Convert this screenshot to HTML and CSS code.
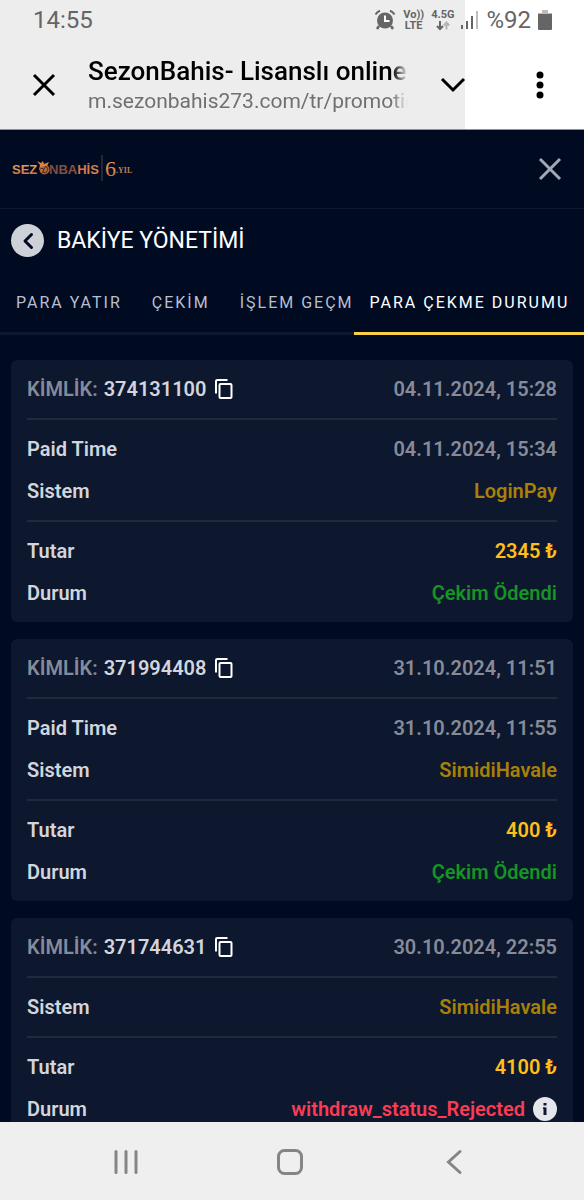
FILE: index.html
```html
<!DOCTYPE html>
<html lang="tr">
<head>
<meta charset="utf-8">
<meta name="viewport" content="width=device-width, initial-scale=1">
<title>SezonBahis- Lisanslı online</title>
<link rel="stylesheet" href="styles.css">
</head>
<body>
<svg class="sprite" aria-hidden="true">
  <symbol id="copy" viewBox="0 0 20 22">
    <path d="M2 15.500V3.200Q2 2 3.200 2H13.500" fill="none" stroke="currentColor" stroke-width="2"/>
    <rect x="5.500" y="6" width="12" height="14" rx="1" fill="none" stroke="currentColor" stroke-width="2"/>
  </symbol>
</svg>
<div class="browser">
  <div class="status">
    <time>14:55</time>
    <div class="status-icons">
      <svg class="alarm" width="22" height="22" viewBox="0 0 22 22" role="img" aria-label="Alarm">
        <circle cx="11" cy="11.500" r="8" fill="#656565"/>
        <path d="M5 17l-2 3M17 17l2 3" stroke="#656565" stroke-width="2.500"/>
        <path d="M1.500 5.500Q3 3 6 1.800M20.500 5.500Q19 3 16 1.800" fill="none" stroke="#656565" stroke-width="2"/>
        <path d="M11 6.500V12h4.500" fill="none" stroke="#fff" stroke-width="2"/>
      </svg>
      <span class="network"><span>Vo))</span><span>LTE</span></span>
      <span class="network">
        <span>4.5G</span>
        <svg width="16" height="11" viewBox="0 0 16 11" aria-hidden="true">
          <path d="M5 1v8M2 6l3 3 3-3" fill="none" stroke="#656565" stroke-width="2"/>
          <path d="M11.500 9.500V3M8.800 5.500l2.700-3 2.700 3" fill="none" stroke="#b5b5b5" stroke-width="2"/>
        </svg>
      </span>
      <svg width="18" height="20" viewBox="0 0 18 20" role="img" aria-label="Sinyal">
        <path d="M1 15v4M6 11v8M11 6v13" stroke="#656565" stroke-width="2"/>
        <path d="M16 1v18" stroke="#bcbcbc" stroke-width="2"/>
      </svg>
      <span class="percent">%92</span>
      <svg width="14" height="20" viewBox="0 0 14 20" role="img" aria-label="Pil">
        <path d="M4 0h6v3h4v3H0V3h4z" fill="#bcbcbc"/>
        <path d="M0 4h14v15q0 1-1 1H1q-1 0-1-1z" fill="#656565"/>
      </svg>
    </div>
  </div>
  <header class="toolbar">
    <button class="icon-button" aria-label="Kapat">
      <svg width="24" height="24" viewBox="0 0 24 24"><path d="M2 2l20 20M22 2L2 22" stroke="#000" stroke-width="3"/></svg>
    </button>
    <div class="page">
      <p class="page-title">SezonBahis- Lisanslı online</p>
      <p class="page-url">m.sezonbahis273.com/tr/promotio</p>
    </div>
    <button class="icon-button" aria-label="Genişlet">
      <svg width="26" height="16" viewBox="0 0 26 16"><path d="M2 2l11 11L24 2" fill="none" stroke="#000" stroke-width="3"/></svg>
    </button>
    <button class="icon-button menu" aria-label="Menü">
      <svg width="8" height="28" viewBox="0 0 8 28"><circle cx="4" cy="4" r="3.500"/><circle cx="4" cy="14" r="3.500"/><circle cx="4" cy="24" r="3.500"/></svg>
    </button>
  </header>
</div>

<main class="site">
  <div class="brand">
    <a class="logo" href="#" aria-label="SezonBahis">
      <svg width="124" height="28" viewBox="0 0 124 28">
        <defs>
          <linearGradient id="warm" x1="0" y1="0" x2="0" y2="1"><stop offset="0" stop-color="#f0a860"/><stop offset="1" stop-color="#d06c35"/></linearGradient>
          <linearGradient id="fade"><stop offset="0" stop-color="#7d4b3d"/><stop offset=".55" stop-color="#8d5142"/><stop offset=".6" stop-color="#d97742"/><stop offset="1" stop-color="#d9834b"/></linearGradient>
        </defs>
        <text x="0" y="19" class="wordmark" fill="url(#warm)">SEZ</text>
        <circle cx="32.500" cy="14.500" r="5" fill="#b96835"/>
        <path d="M25 6l4 2 2-2 1 3 5-2-2 4-4 0-4 4 1-5z" fill="#d98340"/>
        <path d="M28 13l4 1 2-3 2 3-2 4-4-1M32 14l-1 4" fill="none" stroke="#4d2922" stroke-width="1"/>
        <text x="37" y="19" class="wordmark" fill="url(#fade)">NBAHİS</text>
        <path d="M90 0v26" stroke="#49404a"/>
        <text x="93" y="21" class="six" fill="url(#warm)">6</text>
        <text x="104" y="18" class="year" fill="#b9805a">.YIL</text>
      </svg>
    </a>
    <button class="icon-button" aria-label="Kapat">
      <svg width="24" height="24" viewBox="0 0 24 24"><path d="M2 2l20 20M22 2L2 22" stroke="#a3a8b4" stroke-width="3"/></svg>
    </button>
  </div>

  <div class="heading">
    <button class="back" aria-label="Geri">
      <svg width="12" height="18" viewBox="0 0 12 18"><path d="M9.500 2.500L3 9l6.500 6.500" fill="none" stroke="#000b22" stroke-width="3" stroke-linecap="round" stroke-linejoin="round"/></svg>
    </button>
    <h1>BAKİYE YÖNETİMİ</h1>
  </div>

  <nav class="tabs">
    <button class="tab">PARA YATIR</button>
    <button class="tab">ÇEKİM</button>
    <button class="tab cut">İŞLEM GEÇM</button>
    <button class="tab active">PARA ÇEKME DURUMU</button>
  </nav>

  <div class="cards">
    <article class="card">
      <div class="group">
        <div class="row"><span class="ident"><span class="muted">KİMLİK:</span> 374131100 <button class="copy" aria-label="Kopyala"><svg width="20" height="22"><use href="#copy"/></svg></button></span><time class="muted">04.11.2024, 15:28</time></div>
      </div>
      <div class="group">
        <div class="row"><span>Paid Time</span><time class="muted">04.11.2024, 15:34</time></div>
        <div class="row"><span>Sistem</span><span class="system">LoginPay</span></div>
      </div>
      <div class="group">
        <div class="row"><span>Tutar</span><span class="amount">2345 ₺</span></div>
        <div class="row"><span>Durum</span><span class="paid">Çekim Ödendi</span></div>
      </div>
    </article>

    <article class="card">
      <div class="group">
        <div class="row"><span class="ident"><span class="muted">KİMLİK:</span> 371994408 <button class="copy" aria-label="Kopyala"><svg width="20" height="22"><use href="#copy"/></svg></button></span><time class="muted">31.10.2024, 11:51</time></div>
      </div>
      <div class="group">
        <div class="row"><span>Paid Time</span><time class="muted">31.10.2024, 11:55</time></div>
        <div class="row"><span>Sistem</span><span class="system">SimidiHavale</span></div>
      </div>
      <div class="group">
        <div class="row"><span>Tutar</span><span class="amount">400 ₺</span></div>
        <div class="row"><span>Durum</span><span class="paid">Çekim Ödendi</span></div>
      </div>
    </article>

    <article class="card">
      <div class="group">
        <div class="row"><span class="ident"><span class="muted">KİMLİK:</span> 371744631 <button class="copy" aria-label="Kopyala"><svg width="20" height="22"><use href="#copy"/></svg></button></span><time class="muted">30.10.2024, 22:55</time></div>
      </div>
      <div class="group">
        <div class="row"><span>Sistem</span><span class="system">SimidiHavale</span></div>
      </div>
      <div class="group">
        <div class="row"><span>Tutar</span><span class="amount">4100 ₺</span></div>
        <div class="row"><span>Durum</span><span class="rejected">withdraw_status_Rejected
          <button class="info" aria-label="Bilgi"><svg width="24" height="24" viewBox="0 0 24 24"><circle cx="12" cy="12" r="12" fill="#e4e6ec"/><path d="M12 10.500v7.500M12 6v2.500" stroke="#0d172d" stroke-width="3"/><path d="M10 11.200h2" stroke="#0d172d" stroke-width="1.500"/></svg></button></span></div>
      </div>
    </article>
  </div>
</main>

<nav class="system-bar">
  <button aria-label="Son uygulamalar"><svg width="26" height="26" viewBox="0 0 26 26"><path d="M3 2.500v21M13 2.500v21M23 2.500v21" stroke="#858585" stroke-width="3" stroke-linecap="round"/></svg></button>
  <button aria-label="Ana ekran"><svg width="26" height="26" viewBox="0 0 26 26"><rect x="1.500" y="1.500" width="23" height="23" rx="6" fill="none" stroke="#858585" stroke-width="3"/></svg></button>
  <button aria-label="Geri"><svg width="26" height="26" viewBox="0 0 26 26"><path d="M19 2.500L7.500 13 19 23.500" fill="none" stroke="#858585" stroke-width="3" stroke-linecap="round"/></svg></button>
</nav>
</body>
</html>
```

FILE: styles.css
```css
* {
  box-sizing: border-box;
}

body {
  margin: 0;
  height: 100vh;
  display: flex;
  flex-direction: column;
  overflow: hidden;
  background: #000b22;
  font-family: Roboto, "Noto Sans", sans-serif;
}

button {
  padding: 0;
  border: 0;
  background: none;
  font: inherit;
  color: inherit;
  cursor: pointer;
}

svg {
  display: block;
}

h1,
p {
  margin: 0;
}

.sprite {
  display: none;
}

.browser {
  flex: none;
  background: linear-gradient(to right, #ededed calc(100% - 119px), #fff calc(100% - 119px));
  border-bottom: 1px solid #8791ab;
}

.status {
  display: flex;
  justify-content: space-between;
  align-items: center;
  height: 40px;
  padding: 0 32px 0 33px;
  font-size: 24px;
  color: #656565;
}

.status-icons {
  display: flex;
  align-items: center;
  gap: 7px;
}

.network {
  display: flex;
  flex-direction: column;
  align-items: center;
  font-size: 11px;
  font-weight: 700;
  line-height: 11px;
}

.toolbar {
  display: flex;
  align-items: center;
  height: 89px;
  padding: 0 40px 0 32px;
}

.icon-button {
  flex: none;
}

.page {
  flex: 1;
  min-width: 0;
  margin: 0 32px;
  white-space: nowrap;
}

.page-title,
.page-url {
  overflow: hidden;
  -webkit-mask-image: linear-gradient(to left, transparent, #000 16px);
  mask-image: linear-gradient(to left, transparent, #000 16px);
}

.page-title {
  font-size: 26px;
  font-weight: 500;
  line-height: 32px;
}

.page-url {
  font-size: 21px;
  line-height: 28px;
  color: #707070;
}

.menu {
  margin-left: 70px;
}

.site {
  flex: 1;
  min-height: 0;
  overflow: hidden;
}

.brand {
  display: flex;
  justify-content: space-between;
  align-items: center;
  height: 79px;
  padding: 0 22px 0 12px;
  border-bottom: 1px solid #0d1930;
}

.wordmark {
  font: bold 13px "Liberation Sans", sans-serif;
}

.six {
  font: 22px "Liberation Serif", serif;
}

.year {
  font: bold 8px "Liberation Serif", serif;
}

.heading {
  display: flex;
  align-items: center;
  gap: 13px;
  height: 63px;
  padding: 0 11px;
}

.back {
  display: grid;
  place-items: center;
  width: 33px;
  height: 33px;
  border-radius: 50%;
  background: #cfd1d9;
}

h1 {
  font-size: 23px;
  font-weight: 400;
  color: #fff;
}

.tabs {
  display: flex;
  height: 63px;
}

.tab {
  flex: none;
  padding: 0 14px 0 16px;
  border-bottom: 3px solid #0d172d;
  font-size: 16px;
  letter-spacing: 2px;
  white-space: nowrap;
  text-align: left;
  color: #b9bfcc;
}

.tab.cut {
  padding-right: 0;
}

.tab.active {
  flex: 1;
  padding-right: 0;
  border-color: #fbcf45;
  color: #fff;
}

.cards {
  display: flex;
  flex-direction: column;
  gap: 17px;
  padding: 25px 11px;
}

.card {
  padding: 0 16px;
  border-radius: 6px;
  background: #0d172d;
  font-size: 20px;
  font-weight: 600;
  color: #d2d5dc;
}

.group {
  padding: 8px 0;
}

.group + .group {
  border-top: 2px solid #202a3f;
}

.row {
  display: flex;
  justify-content: space-between;
  align-items: center;
  height: 42px;
}

.ident {
  display: flex;
  align-items: center;
  gap: 6px;
}

.copy {
  margin-left: 2px;
  color: #fff;
}

.muted {
  color: #858b99;
}

.system {
  color: #a98009;
}

.amount {
  color: #ffbe1a;
}

.paid {
  color: #169425;
}

.rejected {
  display: flex;
  align-items: center;
  gap: 8px;
  color: #fb3b54;
}

.system-bar {
  flex: none;
  display: flex;
  justify-content: center;
  align-items: center;
  gap: 138px;
  height: 78px;
  padding: 2px 4px 0 0;
  background: #efefef;
}
```
